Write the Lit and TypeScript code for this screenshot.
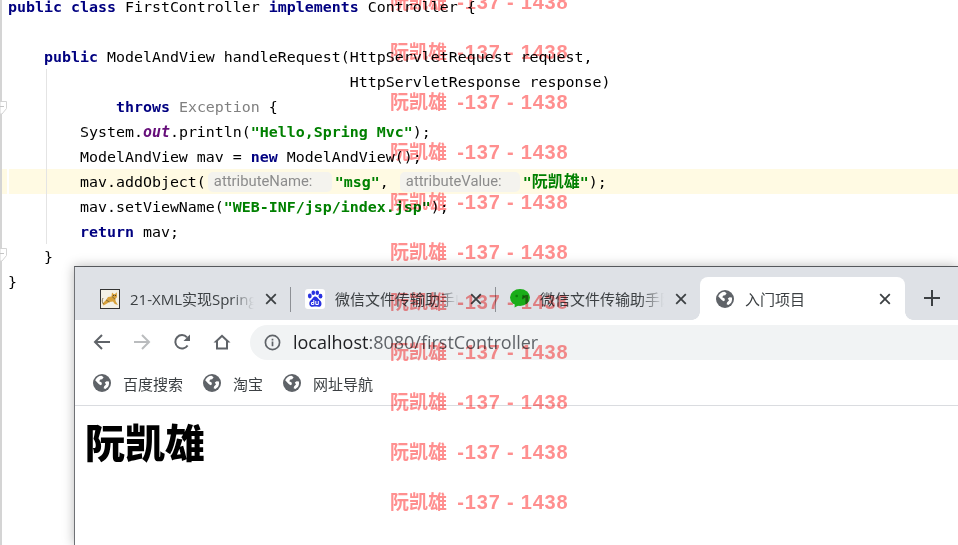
import { LitElement, html, css, svg } from "lit";
import { customElement } from "lit/decorators.js";

const globe = html`<svg class="globe" viewBox="0 0 18 18" width="18" height="18"><circle cx="9" cy="9" r="9" fill="#5f6368"/><path fill="#fff" d="M2.2 6.2C3.4 3.6 5.8 1.9 8.6 1.8L10.6 3.2 9.2 5.2 7.4 5.4 6.2 7.2 8.4 8.2 9 10.2 7.4 11.2 5.2 9.6ZM15.9 7.4C16.3 9.2 16 11.2 14.9 12.9L12.4 15 10.6 14.2 11.2 12.2 13 10.4 11.8 8.6 13.6 7.2Z"/></svg>`;

const tomcat = html`<svg viewBox="0 0 20 20" width="20" height="20"><rect x=".5" y=".5" width="19" height="19" fill="#f4f1e6" stroke="#333"/><path fill="#d8a23c" d="M2.500 14.500 6 11 8 8 11.500 7.500 12 3.500 13.700 5 15 5 16.800 3.300 17 8 15.200 10.300 15.800 12.500 18 16 14.800 15 13 12.500 9.500 13 7 14.500 3.500 16.500Z"/><path fill="none" stroke="#6b5a34" stroke-width=".8" d="M3 9C1.800 11 2 13.500 3.500 15M12 7.500 15.200 10.300M6 11 9.500 13"/><circle cx="13.500" cy="6.500" r=".6" fill="#333"/><circle cx="15.500" cy="6.500" r=".6" fill="#333"/></svg>`;

const baidu = html`<svg viewBox="0 0 20 20" width="20" height="20"><rect width="20" height="20" rx="3" fill="#fff"/><g fill="#2932e1"><ellipse cx="4.800" cy="7" rx="1.900" ry="2.400"/><ellipse cx="8.300" cy="3.800" rx="1.800" ry="2.300"/><ellipse cx="12.300" cy="3.800" rx="1.800" ry="2.300"/><ellipse cx="15.500" cy="7.200" rx="1.900" ry="2.400"/><path d="M10.300 7.500C8 7.500 7.800 10 5.800 11.200 3.400 12.800 3.800 18 7.600 17.800 9 17.700 11.500 17.200 13 17.800 16.800 18.500 17.600 13.500 15 11.400 13 10 12.500 7.500 10.300 7.500Z"/></g><path d="M8.800 11v4.500H6.500v-2h2.300M10.800 12v3.500h2.500V12" fill="none" stroke="#fff" stroke-width="1"/></svg>`;

const wechat = html`<svg viewBox="0 0 20 20" width="20" height="20"><ellipse cx="10" cy="8.500" rx="10" ry="8.500" fill="#1aad19"/><path d="M5 14l-.5 4.500L9.500 16Z" fill="#1aad19"/><circle cx="6.700" cy="7" r="1.300" fill="#0d7c0c"/><circle cx="13.300" cy="7" r="1.300" fill="#0d7c0c"/></svg>`;

const closeIcon = html`<svg class="close" viewBox="0 0 12 12" width="12" height="12"><path d="M1.200 1.200 10.800 10.800M10.800 1.200 1.200 10.800" stroke="#3c4043" stroke-width="1.800" fill="none"/></svg>`;

const tabs = [
  { icon: tomcat, title: "21-XML实现Spring MVC", active: false, sep: true },
  { icon: baidu, title: "微信文件传输助手L网页版", active: false, sep: true },
  { icon: wechat, title: "微信文件传输助手网页版", active: false, sep: false },
  { icon: globe, title: "入门项目", active: true, sep: false },
];

const bookmarks = ["百度搜索", "淘宝", "网址导航"];

@customElement("app-root")
export class AppRoot extends LitElement {
  static styles = css`
    :host {
      display: block;
      position: relative;
      width: 958px;
      height: 545px;
      overflow: hidden;
      background: #fff;
    }
    .editor {
      position: relative;
      height: 550px;
      margin-top: -5px;
      font: 14.95px/25px "DejaVu Sans Mono", monospace;
      color: #000;
    }
    .line {
      height: 25px;
      padding-left: 8px;
      white-space: pre;
    }
    .line.hl {
      box-sizing: border-box;
      background: linear-gradient(90deg, #fffae3 5px, #fff 5px, #fff 7px, #fffae3 7px);
      margin: -1px 0 1px 2px;
      padding: 1px 0 0 6px;
    }
    .kw { color: #000080; font-weight: 700; }
    .str { color: #008000; font-weight: 700; }
    .muted { color: #808080; }
    .field { color: #660e7a; font-weight: 700; font-style: italic; }
    .cjk { font-family: "Noto Sans CJK SC", sans-serif; font-size: 16px; line-height: 1; }
    .hint {
      display: inline-block;
      box-sizing: border-box;
      width: 124px;
      height: 20px;
      margin: 2px 3px 0 2px;
      padding-left: 6px;
      border-radius: 5px;
      background: #f4f3ee;
      color: #8c8c8c;
      font: 14.8px/19px Roboto, sans-serif;
      vertical-align: top;
    }
    .hint.second { width: 120px; margin-left: 11px; }
    .gutter {
      position: absolute;
      left: 0;
      top: 0;
      width: 2px;
      height: 100%;
      background: #d4d4d4;
    }
    .fold { position: absolute; left: 0; }
    .guide {
      position: absolute;
      left: 46px;
      top: 74px;
      width: 1px;
      height: 175px;
      background: #e4e4e4;
    }
    .window {
      position: absolute;
      left: 74px;
      top: 266px;
      width: 884px;
      height: 279px;
      box-sizing: border-box;
      border-top: 1px solid #55585c;
      border-left: 1px solid #6f7175;
      background: #fff;
      box-shadow: 0 0 11px rgba(0, 0, 0, 0.28);
      font-family: "Noto Sans CJK SC", sans-serif;
    }
    .strip {
      display: flex;
      align-items: stretch;
      height: 53px;
      padding: 10px 0 0 10px;
      box-sizing: border-box;
      background: #dee1e6;
    }
    .tab {
      position: relative;
      display: flex;
      align-items: center;
      width: 205px;
      height: 43px;
      box-sizing: border-box;
      padding: 0 14px 0 15px;
      color: #3c4043;
      font: 15px "Open Sans", "Noto Sans CJK SC", sans-serif;
    }
    .tab > svg:first-child { flex: none; margin-top: 1px; }
    .tab .title {
      flex: none;
      width: 126px;
      margin-left: 10px;
      overflow: hidden;
      white-space: nowrap;
      -webkit-mask-image: linear-gradient(90deg, #000 100px, transparent 124px);
      mask-image: linear-gradient(90deg, #000 100px, transparent 124px);
    }
    .tab .close { margin-left: 9px; flex: none; }
    .tab.sep::after {
      content: "";
      position: absolute;
      right: -1px;
      top: 10px;
      width: 1px;
      height: 25px;
      background: #8d9095;
    }
    .tab.active {
      background: #fff;
      border-radius: 8px 8px 0 0;
      padding-left: 16px;
    }
    .tab.active .title { margin-left: 11px; }
    .tab.active .close { margin-left: 8px; }
    .tab.active::before,
    .tab.active::after {
      content: "";
      position: absolute;
      bottom: 0;
      width: 8px;
      height: 8px;
    }
    .tab.active::before {
      left: -8px;
      background: radial-gradient(circle at 0 0, #dee1e6 7.500px, #fff 8px);
    }
    .tab.active::after {
      right: -8px;
      background: radial-gradient(circle at 100% 0, #dee1e6 7.500px, #fff 8px);
    }
    .plus { margin: 13px 0 0 19px; }
    .toolbar {
      display: flex;
      align-items: center;
      height: 45px;
      padding: 0 0 0 18px;
      box-sizing: border-box;
    }
    .nav { flex: none; width: 40px; display: flex; }
    .nav svg { margin-top: -1px; }
    .address {
      flex: 1;
      display: flex;
      align-items: center;
      height: 35px;
      margin: 0 0 0 -3px;
      padding-left: 14px;
      background: #f1f3f4;
      border-radius: 18px 0 0 18px;
      font: 18px "Open Sans", sans-serif;
      color: #5f6368;
    }
    .address span { margin-top: -2px; }
    .address b { font-weight: 400; color: #202124; }
    .address svg { margin-right: 12px; flex: none; }
    .bookmarks {
      display: flex;
      align-items: center;
      gap: 20px;
      height: 41px;
      padding: 0 0 4px 18px;
      box-sizing: border-box;
      border-bottom: 1px solid #dadce0;
      font-size: 15px;
      color: #3c4043;
    }
    .bm { display: flex; align-items: center; gap: 12px; }
    .content { padding: 7px 10px; }
    h1 {
      margin: 0;
      font: 900 40px/56px "Noto Sans CJK SC", sans-serif;
      color: #000;
    }
    .marks {
      position: absolute;
      left: 390px;
      top: -24px;
      display: flex;
      flex-direction: column;
      mix-blend-mode: multiply;
      pointer-events: none;
      white-space: pre;
      color: #ff8f8f;
      font: 700 20px/50px "Liberation Sans", sans-serif;
      letter-spacing: 0.8px;
    }
    .marks span { height: 50px; }
    .marks i {
      font: 700 19px/50px "Noto Sans CJK SC", sans-serif;
      letter-spacing: 0;
      padding-right: 4px;
    }
  `;

  render() {
    return html`
      <div class="editor">
        <div class="line"><span class="kw">public class</span> FirstController <span class="kw">implements</span> Controller {</div>
        <div class="line"> </div>
        <div class="line">    <span class="kw">public</span> ModelAndView handleRequest(HttpServletRequest request,</div>
        <div class="line">                                      HttpServletResponse response)</div>
        <div class="line">            <span class="kw">throws</span> <span class="muted">Exception</span> {</div>
        <div class="line">        System.<span class="field">out</span>.println(<span class="str">"Hello,Spring Mvc"</span>);</div>
        <div class="line">        ModelAndView mav = <span class="kw">new</span> ModelAndView();</div>
        <div class="line hl">        mav.addObject(<span class="hint">attributeName:</span><span class="str">"msg"</span>,<span class="hint second">attributeValue:</span><span class="str">"<span class="cjk">阮凯雄</span>"</span>);</div>
        <div class="line">        mav.setViewName(<span class="str">"WEB-INF/jsp/index.jsp"</span>);</div>
        <div class="line">        <span class="kw">return</span> mav;</div>
        <div class="line">    }</div>
        <div class="line">}</div>
        <div class="gutter"></div>
        <div class="guide"></div>
        ${this.fold(106)}${this.fold(253)}
      </div>

      <div class="window">
        <div class="strip">
          ${tabs.map(
            (t) => html`<div class="tab ${t.active ? "active" : ""} ${t.sep ? "sep" : ""}">
              ${t.icon}<span class="title">${t.title}</span>${closeIcon}
            </div>`
          )}
          <svg class="plus" viewBox="0 0 16 16" width="16" height="16"><path d="M8 0v16M0 8h16" stroke="#3c4043" stroke-width="2" fill="none"/></svg>
        </div>
        <div class="toolbar">
          <span class="nav"><svg viewBox="0 0 18 18" width="18" height="18"><path d="M17 9H2M9 2 2 9l7 7" fill="none" stroke="#5f6368" stroke-width="2"/></svg></span>
          <span class="nav"><svg viewBox="0 0 18 18" width="18" height="18"><path d="M1 9h15M9 2l7 7-7 7" fill="none" stroke="#babcbe" stroke-width="2"/></svg></span>
          <span class="nav"><svg viewBox="0 0 18 18" width="18" height="18"><path d="M14.600 12.500A6.700 6.700 0 1 1 14 4.300" fill="none" stroke="#5f6368" stroke-width="2"/><path d="M17 1.500V8h-6.500Z" fill="#5f6368"/></svg></span>
          <span class="nav"><svg viewBox="0 0 18 18" width="18" height="18"><path d="M9 1.500 .5 9.500H3V16.500H15V9.500H17.500ZM5 14.500V8l4-3.700L13 8v6.500Z" fill="#5f6368" fill-rule="evenodd"/></svg></span>
          <div class="address">
            <svg viewBox="0 0 18 18" width="17" height="17"><circle cx="9" cy="9" r="7.500" fill="none" stroke="#5f6368" stroke-width="1.800"/><path d="M9 8v5M9 5v1.800" stroke="#5f6368" stroke-width="1.800"/></svg>
            <span><b>localhost</b>:8080/firstController</span>
          </div>
        </div>
        <div class="bookmarks">
          ${bookmarks.map((b) => html`<span class="bm">${globe}<span>${b}</span></span>`)}
        </div>
        <div class="content"><h1>阮凯雄</h1></div>
      </div>

      <div class="marks">
        ${Array.from({ length: 11 }, () => html`<span><i>阮凯雄</i> -137 - 1438</span>`)}
      </div>
    `;
  }

  private fold(y: number) {
    return html`<svg class="fold" style="top:${y}px" viewBox="0 0 8 14" width="8" height="14">${svg`<path d="M0 .5H6.500V7.500L2 13H0Z" fill="#fff" stroke="#d4d4d4"/><path d="M0 5.500H4" stroke="#c4c4c4"/>`}</svg>`;
  }
}
